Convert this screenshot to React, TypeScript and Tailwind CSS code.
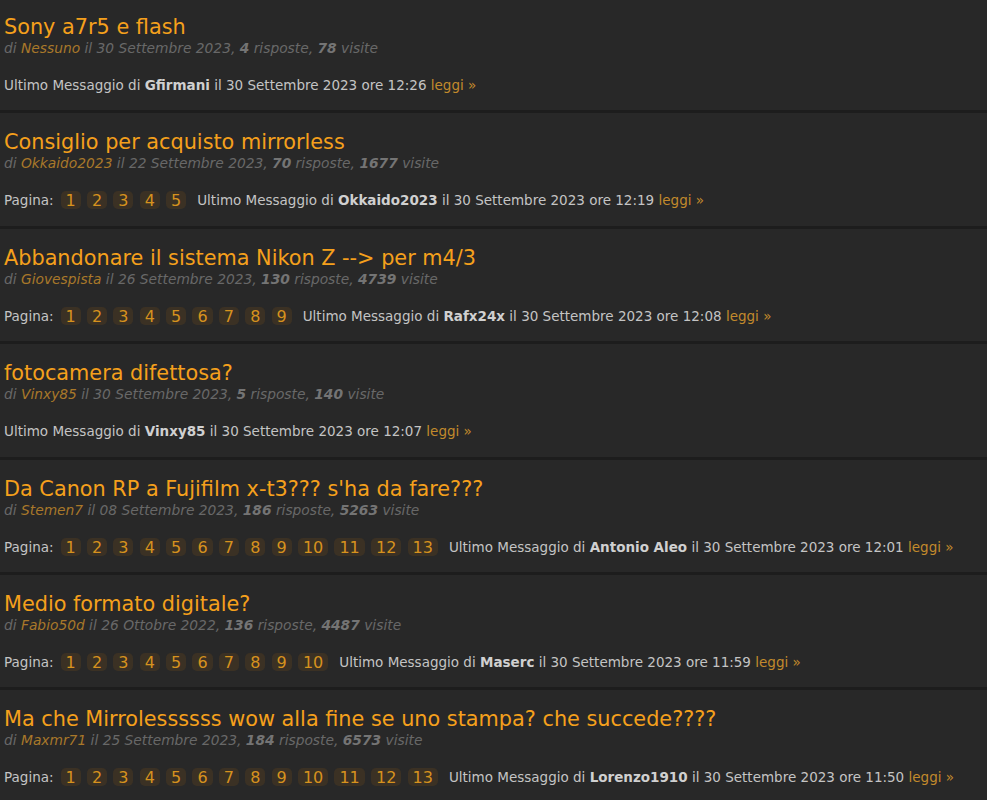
import React from "react";

type Topic = {
  title: string;
  author: string;
  date: string;
  replies: string;
  views: string;
  pages: number;
  last: string;
  lastDate: string;
};

const topics: Topic[] = [
  { title: "Sony a7r5 e flash", author: "Nessuno", date: "30 Settembre 2023", replies: "4", views: "78", pages: 0, last: "Gfirmani", lastDate: "30 Settembre 2023 ore 12:26" },
  { title: "Consiglio per acquisto mirrorless", author: "Okkaido2023", date: "22 Settembre 2023", replies: "70", views: "1677", pages: 5, last: "Okkaido2023", lastDate: "30 Settembre 2023 ore 12:19" },
  { title: "Abbandonare il sistema Nikon Z --> per m4/3", author: "Giovespista", date: "26 Settembre 2023", replies: "130", views: "4739", pages: 9, last: "Rafx24x", lastDate: "30 Settembre 2023 ore 12:08" },
  { title: "fotocamera difettosa?", author: "Vinxy85", date: "30 Settembre 2023", replies: "5", views: "140", pages: 0, last: "Vinxy85", lastDate: "30 Settembre 2023 ore 12:07" },
  { title: "Da Canon RP a Fujifilm x-t3??? s'ha da fare???", author: "Stemen7", date: "08 Settembre 2023", replies: "186", views: "5263", pages: 13, last: "Antonio Aleo", lastDate: "30 Settembre 2023 ore 12:01" },
  { title: "Medio formato digitale?", author: "Fabio50d", date: "26 Ottobre 2022", replies: "136", views: "4487", pages: 10, last: "Maserc", lastDate: "30 Settembre 2023 ore 11:59" },
  { title: "Ma che Mirrolessssss wow alla fine se uno stampa? che succede????", author: "Maxmr71", date: "25 Settembre 2023", replies: "184", views: "6573", pages: 13, last: "Lorenzo1910", lastDate: "30 Settembre 2023 ore 11:50" },
];

function Row({ t }: { t: Topic }) {
  return (
    <div className="border-b-[3px] border-[#1d1d1d] px-1 pt-[17px] pb-[16.4px]">
      <div className="text-[20.8px] leading-[24px] text-[#f5a01c] whitespace-nowrap">{t.title}</div>
      <div className="text-[13.8px] leading-[18px] italic text-[#686868] whitespace-nowrap">
        di <span className="text-[#a9782a]">{t.author}</span> il {t.date}, <b className="text-[#747474]">{t.replies}</b> risposte, <b className="text-[#747474]">{t.views}</b> visite
      </div>
      <div className="mt-[19px] h-[18px] flex items-center whitespace-nowrap text-[13.5px] leading-[18px] text-[#c4c4c4]">
        {t.pages > 0 && (
          <>
            <span className="mr-[7px]">Pagina:</span>
            <div className="flex items-center gap-[6.2px] mr-[11px]">
              {Array.from({ length: t.pages }, (_, i) => (
                <span
                  key={i}
                  className="rounded-[5px] bg-[#3b3124] px-[5px] h-[18px] text-[16px] leading-[19px] text-[#d6921e]"
                >
                  {i + 1}
                </span>
              ))}
            </div>
          </>
        )}
        <span>
          Ultimo Messaggio di <b className="text-[#d0d0d0]">{t.last}</b> il {t.lastDate}{" "}
          <span className="text-[#c28a2c]">leggi »</span>
        </span>
      </div>
    </div>
  );
}

export default function App() {
  return (
    <div
      className="w-[987px] h-[800px] overflow-hidden bg-[#282828]"
      style={{ fontFamily: '"DejaVu Sans", sans-serif' }}
    >
      <div className="-mt-[2px]">
        {topics.map((t, i) => (
          <Row key={i} t={t} />
        ))}
      </div>
    </div>
  );
}
